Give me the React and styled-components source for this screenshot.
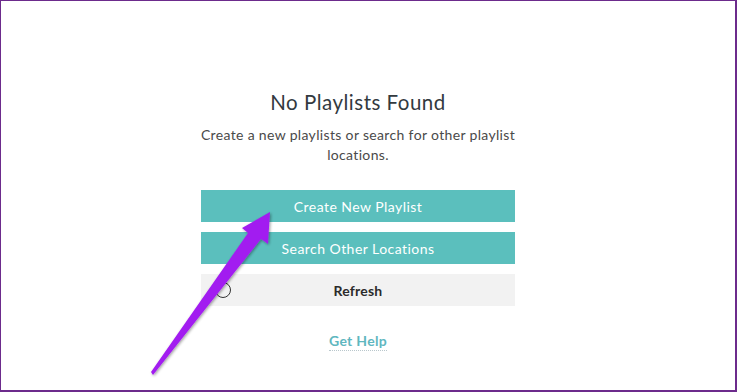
import React from "react";
import styled, { createGlobalStyle } from "styled-components";

const Global = createGlobalStyle`
  html, body { margin: 0; padding: 0; background: #fff; }
  body { font-family: "Lato", "Open Sans", sans-serif; }
`;

const Frame = styled.div`
  position: relative;
  box-sizing: border-box;
  width: 737px;
  height: 392px;
  border-style: solid;
  border-color: #6c2b8c;
  border-width: 1px 2px 2px 1px;
  background: #fff;
  overflow: hidden;
`;

const Column = styled.div`
  width: 314px;
  margin-left: 200px;
  padding-top: 88px;
  display: flex;
  flex-direction: column;
  align-items: stretch;
  text-align: center;
`;

const Title = styled.h1`
  margin: 0;
  font-size: 20.5px;
  line-height: 26px;
  font-weight: 400;
  letter-spacing: 0.5px;
  color: #333a3f;
`;

const Subtitle = styled.p`
  margin: 10px -4px 0;
  font-size: 14px;
  line-height: 20px;
  color: #4a4a4a;
  letter-spacing: 0.34px;
`;

const Buttons = styled.div`
  margin-top: 25px;
  display: flex;
  flex-direction: column;
  gap: 10px;
`;

const Button = styled.button`
  position: relative;
  height: 32px;
  border: none;
  margin: 0;
  padding: 0;
  font-family: inherit;
  font-size: 14px;
  letter-spacing: ${(p) => (p.$secondary ? "0.2px" : "0.45px")};
  font-weight: ${(p) => (p.$secondary ? 700 : 400)};
  color: ${(p) => (p.$secondary ? "#2b2b2b" : "#fff")};
  background: ${(p) => (p.$secondary ? "#f2f2f2" : "#5bbfbd")};
  cursor: pointer;
`;

const Spinner = styled.span`
  position: absolute;
  left: 14px;
  top: 8px;
  width: 16px;
  height: 16px;
  border: 1.5px solid #333;
  border-radius: 50%;
  box-sizing: border-box;
`;

const HelpLink = styled.a`
  align-self: center;
  margin-top: 26px;
  font-size: 14px;
  font-weight: 700;
  letter-spacing: 0.3px;
  color: #5fb7bf;
  text-decoration: none;
  border-bottom: 1px dotted #b9c7cc;
  padding-bottom: 1px;
  cursor: pointer;
`;

const Arrow = styled.svg`
  position: absolute;
  left: 0;
  top: 0;
  width: 737px;
  height: 392px;
  pointer-events: none;
`;

export default function App() {
  return (
    <>
      <Global />
      <Frame>
        <Column>
          <Title>No Playlists Found</Title>
          <Subtitle>
            Create a new playlists or search for other playlist locations.
          </Subtitle>
          <Buttons>
            <Button>Create New Playlist</Button>
            <Button>Search Other Locations</Button>
            <Button $secondary>
              <Spinner />
              Refresh
            </Button>
          </Buttons>
          <HelpLink>Get Help</HelpLink>
        </Column>
        <Arrow viewBox="0 0 737 392">
          <defs>
            <filter id="sh" x="-20%" y="-20%" width="140%" height="140%">
              <feGaussianBlur in="SourceAlpha" stdDeviation="1.5" />
              <feOffset dx="1" dy="1" result="b" />
              <feComponentTransfer>
                <feFuncA type="linear" slope="0.4" />
              </feComponentTransfer>
              <feMerge>
                <feMergeNode />
                <feMergeNode in="SourceGraphic" />
              </feMerge>
            </filter>
          </defs>
          <path
            d="M152 374 L150 371 L247 232 L241 227 L269 211 L267 243 L260 238 Z"
            fill="#a21ff0"
            filter="url(#sh)"
          />
        </Arrow>
      </Frame>
    </>
  );
}
